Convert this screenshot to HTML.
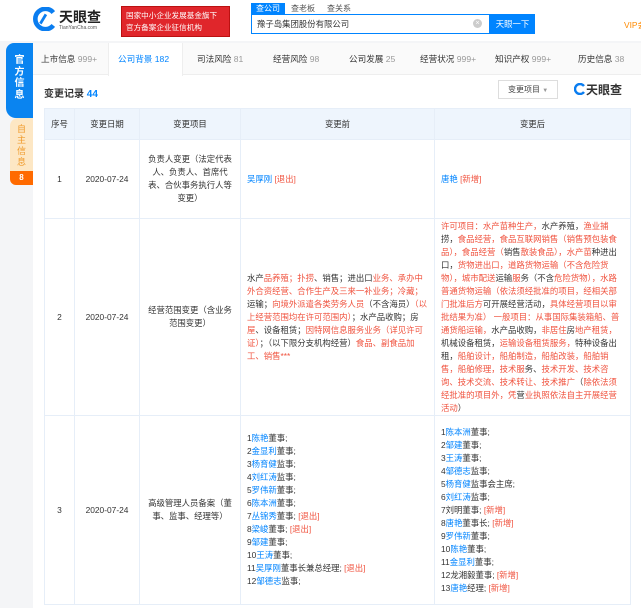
<!DOCTYPE html>
<html><head><meta charset="utf-8">
<style>
*{margin:0;padding:0;box-sizing:border-box}
body{width:641px;height:608px;overflow:hidden;background:#f4f5f7;font-family:"Liberation Sans","Noto Sans CJK SC",sans-serif;color:#333;position:relative;font-size:8.4px}
.abs{position:absolute}
.b{color:#0084ff}.r{color:#f0533f}
table{border-collapse:collapse;table-layout:fixed}
td,th{border:1px solid #e6eef8;vertical-align:middle;font-weight:normal;line-height:13px}
th{background:#eef5fd;color:#333;height:31px;text-align:center}
td.c{text-align:center}
td.l{padding:0 6px}
</style></head><body>
<!-- header -->
<div class="abs" style="left:0;top:0;width:641px;height:41px;background:#fff"></div>
<svg class="abs" style="left:33px;top:7px" width="24" height="24" viewBox="0 0 26 26"><path d="M22 6A11 11 0 1 0 22 20" fill="none" stroke="#0a7df0" stroke-width="5"/><path d="M8 18L14 8" stroke="#0a7df0" stroke-width="3"/></svg>
<div class="abs" style="left:59px;top:7px;font-size:14px;font-weight:bold;color:#222;white-space:nowrap">天眼查</div>
<div class="abs" style="left:59px;top:25px;font-size:5px;color:#555;white-space:nowrap">TianYanCha.com</div>
<div class="abs" style="left:121px;top:6px;width:109px;height:31px;background:#e0262b;color:#fff;font-size:7.6px;line-height:12px;padding:3px 4px;border:1px solid #b11;white-space:nowrap;overflow:hidden">国家中小企业发展基金旗下<br>官方备案企业征信机构</div>
<div class="abs" style="left:251px;top:3px;width:34px;height:11px;background:#0084ff;color:#fff;font-size:8px;line-height:11px;text-align:center">查公司</div>
<div class="abs" style="left:291px;top:3px;font-size:8px;color:#555">查老板</div>
<div class="abs" style="left:327px;top:3px;font-size:8px;color:#555">查关系</div>
<div class="abs" style="left:251px;top:14px;width:239px;height:20px;border:1px solid #0084ff;background:#fff;font-size:8.4px;line-height:18px;padding-left:5px">豫子岛集团股份有限公司</div>
<div class="abs" style="left:473px;top:19px;width:9px;height:9px;border-radius:50%;background:#ccc;color:#fff;font-size:7px;line-height:9px;text-align:center">×</div>
<div class="abs" style="left:490px;top:14px;width:45px;height:20px;background:#0084ff;color:#fff;font-size:8.4px;line-height:20px;text-align:center">天眼一下</div>
<div class="abs" style="left:624px;top:19px;font-size:8.4px;color:#ff8a00;white-space:nowrap">VIP会</div>
<!-- sidebar -->
<div class="abs" style="left:6px;top:43px;width:27px;height:75px;background:#0a84f0;border-radius:8px 0 0 10px;color:#fff;font-size:10px;font-weight:bold;line-height:11.5px;text-align:center;padding-top:12px">官<br>方<br>信<br>息</div>
<div class="abs" style="left:10px;top:118px;width:23px;height:55px;background:#fde7c4;border-radius:8px 0 0 0;color:#f09a2a;font-size:9px;line-height:11px;text-align:center;padding-top:6px">自<br>主<br>信<br>息</div>
<div class="abs" style="left:10px;top:171px;width:23px;height:14px;background:#ff6a00;border-radius:0 0 0 6px;color:#fff;font-size:8px;font-weight:bold;line-height:14px;text-align:center">8</div>
<!-- content -->
<div class="abs" style="left:33px;top:43px;width:608px;height:565px;background:#fff"></div>
<div class="abs" style="left:33px;top:43px;width:608px;height:32px;border-bottom:1px solid #eee;background:#fafafa"></div>
<div class="abs" style="left:108px;top:43px;width:75px;height:33px;background:#fff;border-left:1px solid #eee;border-right:1px solid #eee"></div>
<div class="abs" style="left:33px;top:43px;width:608px;height:32px;font-size:8.6px;line-height:32px;color:#333;white-space:nowrap">
<span class="abs" style="left:8px">上市信息 <span style="color:#999">999+</span></span>
<span class="abs b" style="left:85px">公司背景 182</span>
<span class="abs" style="left:164px">司法风险 <span style="color:#999">81</span></span>
<span class="abs" style="left:240px">经营风险 <span style="color:#999">98</span></span>
<span class="abs" style="left:316px">公司发展 <span style="color:#999">25</span></span>
<span class="abs" style="left:387px">经营状况 <span style="color:#999">999+</span></span>
<span class="abs" style="left:462px">知识产权 <span style="color:#999">999+</span></span>
<span class="abs" style="left:545px">历史信息 <span style="color:#999">38</span></span>
</div>
<div class="abs" style="left:44px;top:85px;font-size:10px;font-weight:bold;color:#333;white-space:nowrap">变更记录 <span class="b">44</span></div>
<div class="abs" style="left:498px;top:80px;width:60px;height:19px;border:1px solid #ddd;font-size:8px;line-height:17px;padding-left:9px;color:#444;white-space:nowrap">变更项目 <span style="color:#999;font-size:6px">▼</span></div>
<svg class="abs" style="left:574px;top:83px" width="12" height="12" viewBox="0 0 12 12"><path d="M10 3A5 5 0 1 0 10 9" fill="none" stroke="#0a7df0" stroke-width="2.4"/></svg>
<div class="abs" style="left:586px;top:81px;font-size:12px;font-weight:bold;color:#333;white-space:nowrap">天眼查</div>
<table class="abs" style="left:44px;top:108px;width:586px">
<colgroup><col style="width:30px"><col style="width:65px"><col style="width:101px"><col style="width:194px"><col style="width:196px"></colgroup>
<tr><th>序号</th><th>变更日期</th><th>变更项目</th><th>变更前</th><th>变更后</th></tr>
<tr style="height:79px"><td class="c">1</td><td class="c">2020-07-24</td><td class="c" style="padding:0 6px">负责人变更（法定代表人、负责人、首席代表、合伙事务执行人等变更）</td><td class="l"><span class="b">吴厚刚</span> <span class="r">[退出]</span></td><td class="l"><span class="b">唐艳</span> <span class="r">[新增]</span></td></tr>
<tr style="height:197px"><td class="c">2</td><td class="c">2020-07-24</td><td class="c" style="padding:0 6px">经营范围变更（含业务范围变更）</td>
<td class="l">水产<span class="r">品养殖；扑捞</span>、销售；进出口<span class="r">业务、承办中外合资经营、合作生产及三来一补业务；冷藏；</span>运输；<span class="r">向境外派遣各类劳务人员</span>（不含海员）<span class="r">（以上经营范围均在许可范围内）</span>；水产品收购；房<span class="r">屋</span>、设备租赁；<span class="r">因特网信息服务业务（详见许可证）</span>；（以下限分支机构经营）<span class="r">食品、副食品加工、销售***</span></td>
<td class="l"><span class="r">许可项目：水产苗种生产，</span>水产养殖，<span class="r">渔业捕</span>捞，<span class="r">食品经营，食品互联网销售（销售预包装食品），食品经营（</span>销售<span class="r">散装食品），水产苗</span>种进出口，<span class="r">货物进出口，道路货物运输（不含危险货物），城市配送</span>运输<span class="r">服</span>务（不含<span class="r">危险货物），水路普通货物运输（依法须经批准的项目，经相关部门批准后方</span>可开展经营活动，<span class="r">具体经营项目以审批结果为准） 一般项目：从事国际集装箱船、普通货船运输，</span>水产品收购，<span class="r">非居住</span>房<span class="r">地产租赁，</span>机械设备租赁，<span class="r">运输设备租赁服务，</span>特种设备出租，<span class="r">船舶设计，船舶制造，船舶改装，船舶销售，船舶修理，技术服</span>务、<span class="r">技术开发、技术咨询、技术交流、技术转让、技术推广</span>（<span class="r">除依法须经批准的项目外，凭</span>营<span class="r">业执照依法自主开展经营活动</span>）</td></tr>
<tr style="height:189px"><td class="c">3</td><td class="c">2020-07-24</td><td class="c" style="padding:0 6px">高级管理人员备案（董事、监事、经理等）</td>
<td class="l">1<span class="b">陈艳</span>董事;<br>2<span class="b">金显利</span>董事;<br>3<span class="b">杨育健</span>监事;<br>4<span class="b">刘红涛</span>监事;<br>5<span class="b">罗伟新</span>董事;<br>6<span class="b">陈本洲</span>董事;<br>7<span class="b">丛锦秀</span>董事; <span class="r">[退出]</span><br>8<span class="b">梁峻</span>董事; <span class="r">[退出]</span><br>9<span class="b">邹建</span>董事;<br>10<span class="b">王涛</span>董事;<br>11<span class="b">吴厚刚</span>董事长兼总经理; <span class="r">[退出]</span><br>12<span class="b">邹德志</span>监事;</td>
<td class="l">1<span class="b">陈本洲</span>董事;<br>2<span class="b">邹建</span>董事;<br>3<span class="b">王涛</span>董事;<br>4<span class="b">邹德志</span>监事;<br>5<span class="b">杨育健</span>监事会主席;<br>6<span class="b">刘红涛</span>监事;<br>7刘明董事; <span class="r">[新增]</span><br>8<span class="b">唐艳</span>董事长; <span class="r">[新增]</span><br>9<span class="b">罗伟新</span>董事;<br>10<span class="b">陈艳</span>董事;<br>11<span class="b">金显利</span>董事;<br>12龙湘毅董事; <span class="r">[新增]</span><br>13<span class="b">唐艳</span>经理; <span class="r">[新增]</span></td></tr>
</table>
</body></html>
